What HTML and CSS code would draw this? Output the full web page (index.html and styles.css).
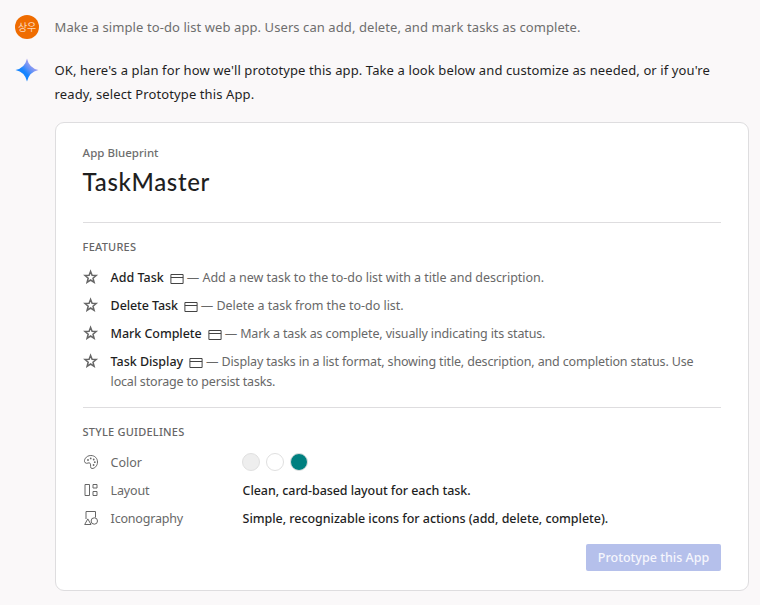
FILE: index.html
```html
<!DOCTYPE html>
<html lang="en">
<head>
<meta charset="utf-8">
<title>App Prototyping</title>
<link rel="stylesheet" href="styles.css">
</head>
<body>
<svg width="0" height="0" class="defs">
  <symbol id="star" viewBox="0 0 16 16"><path d="M7.6 2.4 9.1 6.3 13.2 6.5 10 9.2 11.1 13.3 7.6 11 4.1 13.3 5.2 9.2 2 6.5 6.1 6.3Z" fill="none" stroke="currentColor" stroke-width="1.5"/></symbol>
  <symbol id="window" viewBox="0 0 14 12"><path d="M.9 1.5H13.1V10.5H.9ZM.9 4.5H13.1" fill="none" stroke="currentColor"/></symbol>
</svg>
<main class="chat">
  <div class="message">
    <div class="avatar">상우</div>
    <p class="prompt"><span>Make a simple to-do list web app. Users can add, delete, and mark tasks as complete.</span></p>
  </div>
  <div class="message reply">
    <svg class="spark" viewBox="0 0 24 24">
      <defs><linearGradient id="g" x1="0" y1="1" x2="1" y2="0"><stop offset=".4" stop-color="#1685ff"/><stop offset=".55" stop-color="#5c90f8"/><stop offset=".75" stop-color="#a8a0ee"/></linearGradient></defs>
      <path d="M12 .5Q14 10 23.5 12Q14 14 12 23.5Q10 14 .5 12Q10 10 12 .5Z" fill="url(#g)"/>
    </svg>
    <p class="answer"><span class="a1">OK, here's a plan for how we'll prototype this app. Take a look below and customize as needed, or if you're</span><br><span class="a2">ready, select Prototype this App.</span></p>
  </div>
  <section class="card">
    <div class="eyebrow"><span>App Blueprint</span></div>
    <h1><span>TaskMaster</span></h1>
    <hr>
    <h2 class="h-features"><span>FEATURES</span></h2>
    <ul>
      <li><svg class="icon"><use href="#star"/></svg><p><b class="f1">Add Task</b><svg class="win"><use href="#window"/></svg><span class="d1">— Add a new task to the to-do list with a title and description.</span></p></li>
      <li><svg class="icon"><use href="#star"/></svg><p><b class="f2">Delete Task</b><svg class="win"><use href="#window"/></svg><span class="d2">— Delete a task from the to-do list.</span></p></li>
      <li><svg class="icon"><use href="#star"/></svg><p><b class="f3">Mark Complete</b><svg class="win"><use href="#window"/></svg><span class="d3">— Mark a task as complete, visually indicating its status.</span></p></li>
      <li><svg class="icon"><use href="#star"/></svg><p><b class="f4">Task Display</b><svg class="win"><use href="#window"/></svg><span class="d4">— Display tasks in a list format, showing title, description, and completion status. Use</span><br><span class="d5">local storage to persist tasks.</span></p></li>
    </ul>
    <hr class="second">
    <h2 class="h-style"><span>STYLE GUIDELINES</span></h2>
    <div class="row">
      <svg class="icon" viewBox="0 0 16 16" fill="none" stroke="currentColor"><path d="M2 8.6C.2 6.4 3 1.5 7.8 1.5C12 1.5 14.5 4.5 14.5 8C14.5 12 11.5 14.6 9 14.5C6.5 14.3 8.3 11 7.2 9.4C5.8 7.6 4.3 10.6 2 8.6Z"/><g fill="currentColor" stroke="none"><circle cx="5" cy="6" r=".9"/><circle cx="7.7" cy="4.4" r=".9"/><circle cx="10.7" cy="5.5" r=".9"/><circle cx="11.8" cy="8.2" r=".9"/><circle cx="10.6" cy="11" r=".9"/></g></svg>
      <span class="label"><span class="l1">Color</span></span>
      <span class="swatches"><i class="grey"></i><i class="white"></i><i class="teal"></i></span>
    </div>
    <div class="row">
      <svg class="icon" viewBox="0 0 16 16" fill="none" stroke="currentColor"><path d="M2 2.5H6.5V13.5H2ZM10 2.5H14V6H10ZM10 9.5H14V13.5H10Z"/></svg>
      <span class="label"><span class="l2">Layout</span></span>
      <b class="v1">Clean, card-based layout for each task.</b>
    </div>
    <div class="row">
      <svg class="icon" viewBox="0 0 16 16" fill="none" stroke="currentColor"><path d="M3 9V1.5H12.5V7.5M1.7 14.5 4.8 8.9 8 14.5Z"/><circle cx="11.3" cy="11" r="3.2"/></svg>
      <span class="label"><span class="l3">Iconography</span></span>
      <b class="v2">Simple, recognizable icons for actions (add, delete, complete).</b>
    </div>
    <button disabled><span>Prototype this App</span></button>
  </section>
</main>
</body>
</html>
```
FILE: styles.css
```css
* { box-sizing: border-box; }
body {
  margin: 0;
  height: 605px;
  overflow: hidden;
  background: #faf8f9;
  color: #1f1f1f;
  font: 13px/20px "Noto Sans", "Noto Sans CJK KR", sans-serif;
}
.defs { position: absolute; }
p, h1, h2, ul { margin: 0; padding: 0; }
b { font-weight: 500; }
.chat { padding: 15px 11px 0 15px; }
.message { display: flex; gap: 15.6px; }
.avatar {
  width: 24px; height: 24px; border-radius: 50%;
  background: #ef6c00; color: #fbd9bd;
  font: 10px/24px "Noto Sans CJK KR", sans-serif;
  text-align: center; letter-spacing: -.3px;
}
.prompt { line-height: 24px; color: #6e6e6e; letter-spacing: .08px; }
.reply { margin-top: 19px; }
.spark { width: 24px; height: 24px; flex: none; }
.answer { line-height: 24px; white-space: nowrap; letter-spacing: .106px; }
.card {
  margin: 16px 0 0 40px;
  height: 469px;
  padding: 20px 27px 0 26.6px;
  background: #fff;
  border: 1px solid #dedddf;
  border-radius: 9px;
}
.eyebrow { font-size: 11.5px; font-weight: 500; color: #6e6e6e; }
h1 { font: 500 24px/32px Lato, sans-serif; letter-spacing: .65px; margin-top: 3px; }
hr { border: 0; height: 1px; background: #dedddf; margin: 24px 0 14px; }
h2 { font-size: 11px; line-height: 20px; font-weight: 500; color: #666; letter-spacing: .23px; }
ul { list-style: none; margin-top: 10px; font-size: 12.5px; }
li { display: flex; gap: 12px; margin-bottom: 7px; color: #686868; }
li p { white-space: nowrap; padding-top: 1px; }
li b { color: #1f1f1f; }
.icon { width: 16px; height: 16px; margin-top: 2px; flex: none; color: #666; }
.win { width: 14px; height: 12px; margin: 0 3px 0 6px; vertical-align: -3px; color: #444; }
.f2 { letter-spacing: -.1px; }
.f3 { letter-spacing: -.06px; }
.f4 { letter-spacing: -.04px; }
.d1 { letter-spacing: -.04px; }
.d2 { letter-spacing: -.03px; }
.d3 { letter-spacing: -.13px; }
.d4 { letter-spacing: -.15px; }
.d5 { letter-spacing: -.17px; }
hr.second { margin: 15px 0 14px; }
.row { display: flex; align-items: flex-start; gap: 12px; height: 28px; color: #686868; font-size: 12.5px; }
.h-style { margin-bottom: 10px; }
.row b { color: #1f1f1f; white-space: nowrap; padding-top: 1px; }
.label { width: 120px; padding-top: 1px; }
.l2 { letter-spacing: -.15px; }
.l3 { letter-spacing: -.2px; }
.v1 { letter-spacing: -.07px; }
.v2 { letter-spacing: -.045px; }
.swatches { display: flex; gap: 6px; padding-top: 1px; margin-left: -.6px; }
.swatches i { width: 18px; height: 18px; border: 1px solid #e0e0e0; border-radius: 50%; }
.grey { background: #eee; }
.teal { background: #008080; }
button {
  display: block; margin: 8px 0 0 auto; padding: 1px 0 0;
  width: 135px; height: 27px;
  border: 0; border-radius: 2px;
  background: #b5c0eb; color: #f5f6fd;
  font: 500 12.5px/26px "Noto Sans", sans-serif;
  white-space: nowrap;
}
```
